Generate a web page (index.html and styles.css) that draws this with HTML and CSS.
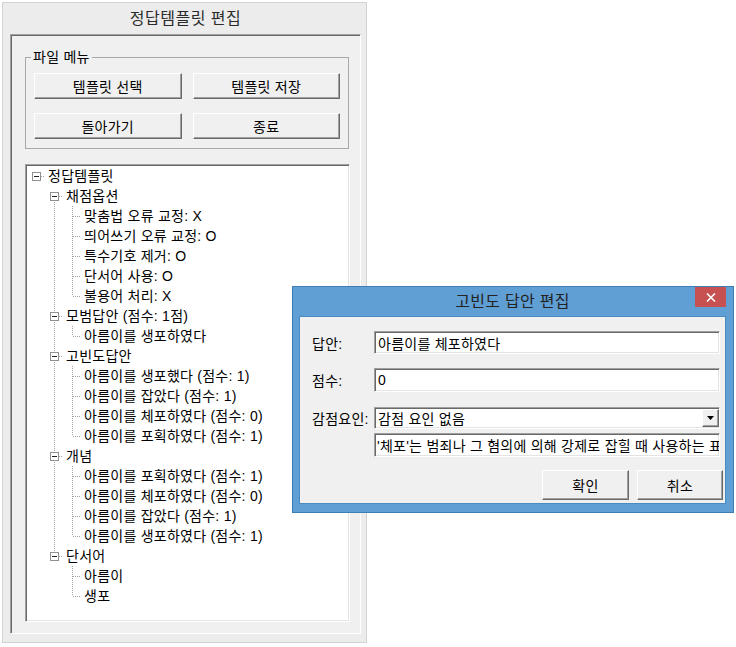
FILE: index.html
```html
<!DOCTYPE html>
<html lang="ko">
<head>
<meta charset="utf-8">
<title>정답템플릿 편집</title>
<link rel="stylesheet" href="styles.css">
</head>
<body>
<div class="win">
  <div class="win-title">정답템플릿 편집</div>
  <div class="panel">
    <fieldset class="group">
      <legend>파일 메뉴</legend>
      <div class="btn-grid">
        <button class="btn">템플릿 선택</button>
        <button class="btn">템플릿 저장</button>
        <button class="btn">돌아가기</button>
        <button class="btn">종료</button>
      </div>
    </fieldset>
    <div class="tree">
      <div class="row"><span class="c b"><i class="xb"></i></span><span class="t">정답템플릿</span></div>
      <div class="row"><span class="c"></span><span class="c b down"><i class="xb"></i></span><span class="t">채점옵션</span></div>
      <div class="row"><span class="c"></span><span class="c v"></span><span class="c tee"></span><span class="t">맞춤법 오류 교정: X</span></div>
      <div class="row"><span class="c"></span><span class="c v"></span><span class="c tee"></span><span class="t">띄어쓰기 오류 교정: O</span></div>
      <div class="row"><span class="c"></span><span class="c v"></span><span class="c tee"></span><span class="t">특수기호 제거: O</span></div>
      <div class="row"><span class="c"></span><span class="c v"></span><span class="c tee"></span><span class="t">단서어 사용: O</span></div>
      <div class="row"><span class="c"></span><span class="c v"></span><span class="c ell"></span><span class="t">불용어 처리: X</span></div>
      <div class="row"><span class="c"></span><span class="c b both"><i class="xb"></i></span><span class="t">모범답안 (점수: 1점)</span></div>
      <div class="row"><span class="c"></span><span class="c v"></span><span class="c ell"></span><span class="t">아름이를 생포하였다</span></div>
      <div class="row"><span class="c"></span><span class="c b both"><i class="xb"></i></span><span class="t">고빈도답안</span></div>
      <div class="row"><span class="c"></span><span class="c v"></span><span class="c tee"></span><span class="t">아름이를 생포했다 (점수: 1)</span></div>
      <div class="row"><span class="c"></span><span class="c v"></span><span class="c tee"></span><span class="t">아름이를 잡았다 (점수: 1)</span></div>
      <div class="row"><span class="c"></span><span class="c v"></span><span class="c tee"></span><span class="t">아름이를 체포하였다 (점수: 0)</span></div>
      <div class="row"><span class="c"></span><span class="c v"></span><span class="c ell"></span><span class="t">아름이를 포획하였다 (점수: 1)</span></div>
      <div class="row"><span class="c"></span><span class="c b both"><i class="xb"></i></span><span class="t">개념</span></div>
      <div class="row"><span class="c"></span><span class="c v"></span><span class="c tee"></span><span class="t">아름이를 포획하였다 (점수: 1)</span></div>
      <div class="row"><span class="c"></span><span class="c v"></span><span class="c tee"></span><span class="t">아름이를 체포하였다 (점수: 0)</span></div>
      <div class="row"><span class="c"></span><span class="c v"></span><span class="c tee"></span><span class="t">아름이를 잡았다 (점수: 1)</span></div>
      <div class="row"><span class="c"></span><span class="c v"></span><span class="c ell"></span><span class="t">아름이를 생포하였다 (점수: 1)</span></div>
      <div class="row"><span class="c"></span><span class="c b up"><i class="xb"></i></span><span class="t">단서어</span></div>
      <div class="row"><span class="c"></span><span class="c"></span><span class="c tee"></span><span class="t">아름이</span></div>
      <div class="row"><span class="c"></span><span class="c"></span><span class="c ell"></span><span class="t">생포</span></div>
    </div>
  </div>
</div>

<div class="dlg">
  <div class="dlg-title">
    <span></span>
    <span class="dlg-name">고빈도 답안 편집</span>
    <span class="close"><svg width="10" height="9" viewBox="0 0 10 9"><path d="M1 0.5L9 8.5M9 0.5L1 8.5" stroke="#fff" stroke-width="1.6" fill="none"/></svg></span>
  </div>
  <div class="client">
    <div class="frow"><span class="lbl">답안:</span><div class="field">아름이를 체포하였다</div></div>
    <div class="frow r2"><span class="lbl">점수:</span><div class="field f24">0</div></div>
    <div class="frow r3"><span class="lbl">감점요인:</span><div class="field combo"><span class="combo-text">감점 요인 없음</span><span class="dd"><svg width="7" height="4" viewBox="0 0 7 4"><path d="M0 0H7L3.5 4Z" fill="#000"/></svg></span></div></div>
    <div class="frow r4"><span></span><div class="field f24 desc">'체포'는 범죄나 그 혐의에 의해 강제로 잡힐 때 사용하는 표현입니다.</div></div>
    <div class="actions">
      <button class="btn dbtn ok">확인</button>
      <button class="btn dbtn">취소</button>
    </div>
  </div>
</div>
</body>
</html>
```
FILE: styles.css
```css
body {
  margin: 0;
  width: 736px;
  height: 647px;
  position: relative;
  overflow: hidden;
  background: #fff;
  font-family: "Liberation Sans", "Noto Sans CJK KR", sans-serif;
  font-size: 14px;
  letter-spacing: 0.25px;
  color: #000;
}

/* ---------- main window ---------- */
.win {
  margin: 2px 0 0 2px;
  width: 365px;
  height: 641px;
  box-sizing: border-box;
  border: 1px solid #d3d3d3;
  background: #ececec;
  padding: 0 5px 8px 7px;
  display: flex;
  flex-direction: column;
}
.win-title {
  height: 31px;
  line-height: 31px;
  text-align: center;
  font-size: 16px;
  letter-spacing: 0.5px;
  color: #2b2b2b;
}
.panel {
  flex: 1;
  display: flex;
  flex-direction: column;
  background: #f0f0f0;
  border: 1px solid;
  border-color: #a0a0a0 #fff #fff #a0a0a0;
  box-shadow: inset 1px 1px #696969;
  padding: 14px 11px 11px 14px;
  min-height: 0;
}

.group {
  margin: 0;
  padding: 8px 8px 9px 8px;
  border: 1px solid #a8a8a8;
  min-width: 0;
}
.group legend {
  margin-left: -3px;
  padding: 0 2px;
  line-height: 16px;
  font-size: 14px;
}
.btn-grid {
  display: grid;
  grid-template-columns: 1fr 1fr;
  grid-auto-rows: 26px;
  column-gap: 11px;
  row-gap: 14px;
}
.btn {
  box-sizing: border-box;
  border: 1px solid;
  border-color: #fff #696969 #696969 #fff;
  box-shadow: inset -1px -1px #a0a0a0;
  background: #f0f0f0;
  font: inherit;
  letter-spacing: inherit;
  color: #000;
  padding: 0;
  margin: 0;
}

/* ---------- tree ---------- */
.tree {
  flex: 1;
  margin: 15px -1px 0 0;
  background: #fff;
  border: 1px solid;
  border-color: #a0a0a0 #fff #fff #a0a0a0;
  box-shadow: inset 1px 1px #696969, inset -1px -1px #e3e3e3;
  padding: 1px 0 0 1px;
  overflow: hidden;
  --vd: repeating-linear-gradient(to bottom, #a0a0a0 0 1px, transparent 1px 2px);
  --hd: repeating-linear-gradient(to right, #a0a0a0 0 1px, transparent 1px 2px);
}
.row {
  display: flex;
  height: 20px;
  line-height: 20px;
  white-space: nowrap;
}
.c {
  flex: none;
  width: 18px;
  height: 20px;
  display: flex;
  align-items: flex-start;
}
.c.v {
  background: var(--vd) 9px 0 / 1px 20px no-repeat;
}
.c.tee {
  background: var(--hd) 10px 10px / 8px 1px no-repeat, var(--vd) 9px 0 / 1px 20px no-repeat;
}
.c.ell {
  background: var(--hd) 10px 10px / 8px 1px no-repeat, var(--vd) 9px 0 / 1px 10px no-repeat;
}
.c.b {
  background: var(--hd) 14px 10px / 4px 1px no-repeat;
}
.c.b.down {
  background: var(--hd) 14px 10px / 4px 1px no-repeat, var(--vd) 9px 16px / 1px 4px no-repeat;
}
.c.b.both {
  background: var(--hd) 14px 10px / 4px 1px no-repeat, var(--vd) 9px 0 / 1px 20px no-repeat;
}
.c.b.up {
  background: var(--hd) 14px 10px / 4px 1px no-repeat, var(--vd) 9px 0 / 1px 6px no-repeat;
}
.xb {
  display: block;
  width: 9px;
  height: 9px;
  box-sizing: border-box;
  margin: 6px 0 0 5px;
  border: 1px solid #919191;
  background: linear-gradient(#222, #222) center / 5px 1px no-repeat, #fff;
}
.t {
  padding-left: 3px;
}

/* ---------- dialog ---------- */
.dlg {
  position: absolute;
  left: 292px;
  top: 286px;
  width: 442px;
  height: 227px;
  box-sizing: border-box;
  border: 1px solid #3f7db5;
  background: #5f9fd4;
  padding: 0 7px 8px 6px;
  display: flex;
  flex-direction: column;
}
.dlg-title {
  height: 29px;
  flex: none;
  display: grid;
  grid-template-columns: 1fr auto 1fr;
}
.dlg-name {
  font-size: 16px;
  letter-spacing: 0.3px;
  line-height: 29px;
  color: #232323;
}
.close {
  justify-self: end;
  width: 31px;
  height: 20px;
  background: #c75050;
  display: flex;
  align-items: center;
  justify-content: center;
}
.client {
  flex: 1;
  background: #f0f0f0;
  border: 1px solid #4c8ac2;
  padding: 14px 2px 3px 12px;
}
.frow {
  display: grid;
  grid-template-columns: 62px 1fr;
  align-items: center;
  margin-right: 3px;
}
.frow.r2 { margin-top: 14px; }
.frow.r3 { margin-top: 15px; }
.frow.r4 { margin-top: 4px; }
.field {
  height: 23px;
  box-sizing: border-box;
  border: 1px solid;
  border-color: #a0a0a0 #fff #fff #a0a0a0;
  box-shadow: inset 1px 1px #696969, inset -1px -1px #e3e3e3;
  background: #fff;
  padding: 0 3px;
  display: flex;
  align-items: center;
  white-space: nowrap;
  overflow: hidden;
}
.field.f24 { height: 24px; }
.combo {
  height: 22px;
  padding: 1px 0 1px 3px;
  align-items: stretch;
}
.combo-text {
  flex: 1;
  display: flex;
  align-items: center;
}
.dd {
  width: 17px;
  flex: none;
  box-sizing: border-box;
  border: 1px solid;
  border-color: #fff #696969 #696969 #fff;
  box-shadow: inset -1px -1px #a0a0a0;
  background: #f0f0f0;
  display: flex;
  align-items: center;
  justify-content: center;
}
.desc {
  padding-left: 2px;
}
.actions {
  display: flex;
  justify-content: flex-end;
  gap: 8px;
  margin-top: 13px;
}
.dbtn {
  width: 86px;
  height: 30px;
}
.dbtn.ok {
  width: 87px;
}
```
